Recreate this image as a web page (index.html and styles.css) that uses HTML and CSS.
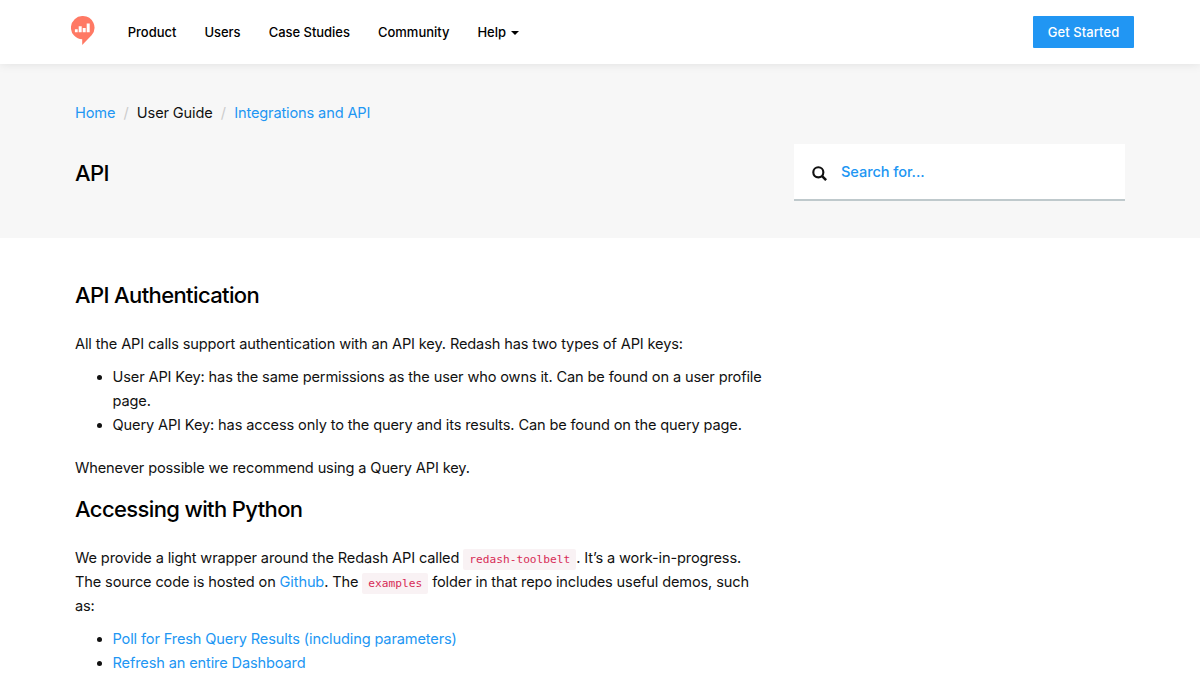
FILE: index.html
```html
<!DOCTYPE html>
<html lang="en">
<head>
<meta charset="UTF-8">
<meta name="viewport" content="width=device-width, initial-scale=1.0">
<title>API</title>
<link rel="stylesheet" href="styles.css">
</head>
<body>
  <header class="navbar">
    <a class="logo" href="#">
      <svg width="24" height="30" viewBox="0 0 24 30">
        <path fill="#ff7964" d="M12 0a11.6 11.6 0 0 1 8.6 19.2L11.2 29v-5.7A11.6 11.6 0 0 1 12 0z"/>
        <path fill="#fff" d="M3.9 13.3h2.8v3H3.9zM7.7 10.2h3v6.1h-3zM11.7 12.1h3v4.2h-3zM15.7 7.6h3v8.7h-3z"/>
      </svg>
    </a>
    <nav class="menu">
      <a href="#">Product</a>
      <a href="#">Users</a>
      <a href="#">Case Studies</a>
      <a href="#">Community</a>
      <a href="#" class="dropdown">Help</a>
    </nav>
    <a href="#" class="btn">Get Started</a>
  </header>

  <section class="page-header">
    <ol class="breadcrumb">
      <li><a href="#">Home</a></li>
      <li>User Guide</li>
      <li><a href="#">Integrations and API</a></li>
    </ol>
    <div class="title-row">
      <h1>API</h1>
      <form class="search">
        <svg width="15" height="15" viewBox="0 0 14 14" fill="none" stroke="#111">
          <circle cx="5.9" cy="5.9" r="4.7" stroke-width="2"/>
          <path d="M9.2 9.2l4 4" stroke-width="2.4"/>
        </svg>
        <input type="text" placeholder="Search for...">
      </form>
    </div>
  </section>

  <main class="content">
    <h2>API Authentication</h2>
    <p>All the API calls support authentication with an API key. Redash has two types of API keys:</p>
    <ul>
      <li>User API Key: has the same permissions as the user who owns it. Can be found on a user profile page.</li>
      <li>Query API Key: has access only to the query and its results. Can be found on the query page.</li>
    </ul>
    <p class="note">Whenever possible we recommend using a Query API key.</p>

    <h2>Accessing with Python</h2>
    <p>We provide a light wrapper around the Redash API called <code>redash-toolbelt</code>. It’s a work-in-progress. The source code is hosted on <a href="#">Github</a>. The <code>examples</code> folder in that repo includes useful demos, such as:</p>
    <ul>
      <li><a href="#">Poll for Fresh Query Results (including parameters)</a></li>
      <li><a href="#">Refresh an entire Dashboard</a></li>
    </ul>
  </main>
</body>
</html>
```
FILE: styles.css
```css
* {
  box-sizing: border-box;
}

body {
  margin: 0;
  height: 675px;
  overflow: hidden;
  font-family: Inter, "Liberation Sans", sans-serif;
  font-size: 14.6px;
  line-height: 24px;
  letter-spacing: -0.14px;
  color: #111;
  background: #fff;
}

a {
  color: #2196f3;
  text-decoration: none;
}

.navbar {
  position: relative;
  display: flex;
  align-items: center;
  height: 64px;
  padding: 0 66px 0 71px;
  background: #fff;
  box-shadow: 0 0 10px rgba(0, 0, 0, 0.1);
}

.logo {
  display: flex;
  margin-top: -2px;
}

.menu {
  display: flex;
  gap: 28.1px;
  flex: 1;
  margin-left: 32.8px;
  font-size: 13px;
  font-weight: 500;
  letter-spacing: -0.03px;
}

.menu a {
  color: #000;
}

.dropdown::after {
  content: "";
  display: inline-block;
  margin-left: 5px;
  vertical-align: 2px;
  border-top: 4px solid #000;
  border-left: 4px solid transparent;
  border-right: 4px solid transparent;
}

.btn {
  width: 101px;
  height: 32px;
  line-height: 32px;
  border-radius: 1px;
  background: #2196f3;
  color: #fff;
  font-size: 13px;
  font-weight: 500;
  letter-spacing: 0.08px;
  text-align: center;
}

.page-header {
  height: 174px;
  padding: 37px 75px 0;
  background: #f7f7f7;
}

.breadcrumb {
  display: flex;
  margin: 0;
  padding: 0;
  list-style: none;
}

.breadcrumb li + li::before {
  content: "/";
  padding: 0 8.2px;
  color: #ccc;
}

.title-row {
  display: flex;
  justify-content: space-between;
  margin-top: 19px;
}

h1,
h2 {
  margin: 0;
  font-size: 22px;
  font-weight: 450;
  line-height: 26px;
  letter-spacing: -0.62px;
  color: #000;
}

h1 {
  margin-top: 16px;
}

.search {
  display: flex;
  align-items: center;
  width: 331px;
  height: 57px;
  padding-left: 18px;
  background: #fff;
  border-bottom: 2px solid #bfc9cc;
}

.search svg {
  margin-top: 3px;
}

.search input {
  flex: 1;
  margin-left: 14px;
  padding: 0;
  border: 0;
  outline: 0;
  font: inherit;
  font-weight: 500;
  letter-spacing: -0.1px;
}

.search input::placeholder {
  color: #2196f3;
}

.content {
  width: 690px;
  margin-left: 75px;
  padding-top: 44px;
}

.content p {
  margin: 24px 0 9px;
}

.content ul {
  margin: 0 0 18.5px;
  padding-left: 37.5px;
}

.content .note {
  margin: 0 0 16px;
}

code {
  padding: 4px 6px;
  border-radius: 2px;
  background: #f9f2f4;
  color: #d72b56;
  font-family: "DejaVu Sans Mono", monospace;
  font-size: 11.2px;
  line-height: 1;
  letter-spacing: 0;
}
```
